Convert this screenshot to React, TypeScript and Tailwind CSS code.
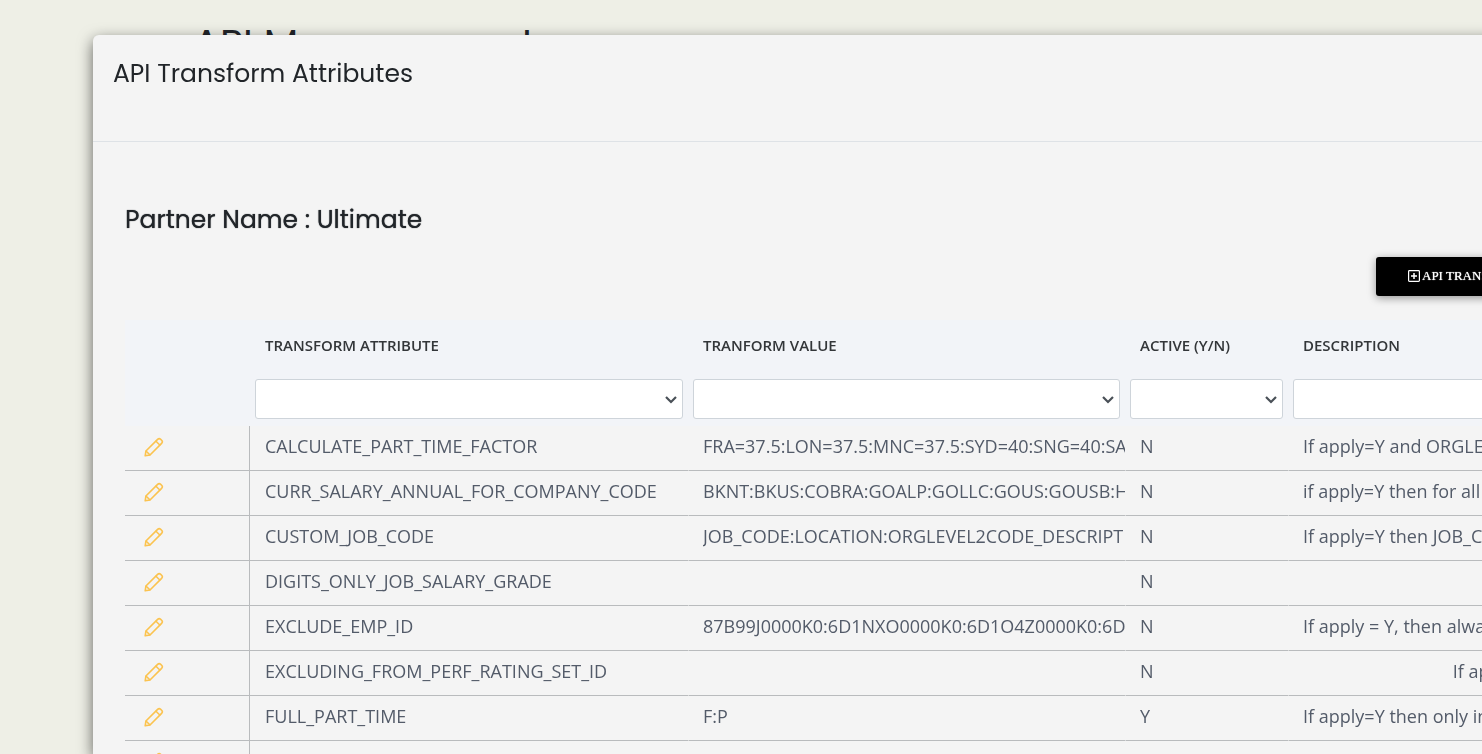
import React from "react";

type Row = { attribute: string; value: string; active: string; description: string };

const rows: Row[] = [
  { attribute: "CALCULATE_PART_TIME_FACTOR", value: "FRA=37.5:LON=37.5:MNC=37.5:SYD=40:SNG=40:SAO=40", active: "N", description: "If apply=Y and ORGLEVEL" },
  { attribute: "CURR_SALARY_ANNUAL_FOR_COMPANY_CODE", value: "BKNT:BKUS:COBRA:GOALP:GOLLC:GOUS:GOUSB:HK", active: "N", description: "if apply=Y then for all" },
  { attribute: "CUSTOM_JOB_CODE", value: "JOB_CODE:LOCATION:ORGLEVEL2CODE_DESCRIPTION", active: "N", description: "If apply=Y then JOB_CODE" },
  { attribute: "DIGITS_ONLY_JOB_SALARY_GRADE", value: "", active: "N", description: "" },
  { attribute: "EXCLUDE_EMP_ID", value: "87B99J0000K0:6D1NXO0000K0:6D1O4Z0000K0:6D1", active: "N", description: "If apply = Y, then always" },
  { attribute: "EXCLUDING_FROM_PERF_RATING_SET_ID", value: "", active: "N", description: " ".repeat(32) + "If apply=Y" },
  { attribute: "FULL_PART_TIME", value: "F:P", active: "Y", description: "If apply=Y then only in" },
  { attribute: "", value: "", active: "", description: "" },
];

const headings = ["TRANSFORM ATTRIBUTE", "TRANFORM VALUE", "ACTIVE (Y/N)", "DESCRIPTION"];

function PencilIcon() {
  return (
    <svg width="20" height="20" viewBox="0 0 20 20" fill="none" stroke="currentColor" strokeWidth="1.6" strokeLinejoin="round" strokeLinecap="round" aria-hidden="true">
      <path d="M1.2 18.8 1.9 14 13.6 2.4a2.2 2.2 0 0 1 3.1 0l.9.9a2.2 2.2 0 0 1 0 3.1L6 18Z" />
      <path d="M12 4.2l3.8 3.8M2.2 14.2l3.6 3.6" />
    </svg>
  );
}

function PlusSquareIcon() {
  return (
    <svg width="12" height="12" viewBox="0 0 12 12" fill="none" stroke="currentColor" strokeWidth="1.2" aria-hidden="true">
      <rect x="0.6" y="0.6" width="10.8" height="10.8" rx="0.8" />
      <path d="M6 3v6M3 6h6" strokeWidth="1.5" />
    </svg>
  );
}

function Cell({ children }: { children: React.ReactNode }) {
  return (
    <td className="overflow-hidden border-b border-l border-b-[#b9bbbd] border-l-[#f4f4f4] p-0 pb-[5px] pl-[14px] nth-2:border-l-0 nth-2:pl-[15px]">
      <div className="overflow-hidden whitespace-pre">{children}</div>
    </td>
  );
}

function Filter({ label }: { label: string }) {
  return (
    <div className="relative">
      <select
        aria-label={label}
        className="block h-10 w-full appearance-none rounded-[3px] border border-[#ced4da] bg-white px-1 text-base text-[#495057]"
      >
        <option />
      </select>
      <svg className="pointer-events-none absolute top-[14px] right-[5px]" width="14" height="14" viewBox="0 0 14 14" fill="none" stroke="#495057" strokeWidth="2.2" aria-hidden="true">
        <path d="M2 4 7 9 12 4" />
      </svg>
    </div>
  );
}

function AttributeTable() {
  return (
    <table className="w-full table-fixed border-separate border-spacing-0 text-left">
      <colgroup>
        <col className="w-[125px]" />
        <col className="w-[438px]" />
        <col className="w-[437px]" />
        <col className="w-[163px]" />
        <col />
      </colgroup>
      <thead className="bg-[#f2f4f8]">
        <tr className="h-[52px]">
          <td />
          {headings.map((h) => (
            <th key={h} scope="col" className="p-0 pb-0.5 pl-[15px] text-[15px] leading-5 font-semibold text-[#333639]">
              {h}
            </th>
          ))}
        </tr>
        <tr className="h-[54px]">
          <td />
          {headings.map((h) => (
            <td key={h} className="px-[5px] py-0">
              <Filter label={h} />
            </td>
          ))}
        </tr>
      </thead>
      <tbody className="text-[18px] leading-6 text-[#535b69]">
        {rows.map((r, i) => (
          <tr key={i} className="h-[45px]">
            <td className="border-r border-b border-[#b9bbbd] p-0 pb-0.5 pl-[19px]">
              <button type="button" aria-label="Edit" className="block text-[#fbc34f]">
                <PencilIcon />
              </button>
            </td>
            <Cell>{r.attribute}</Cell>
            <Cell>{r.value}</Cell>
            <Cell>{r.active}</Cell>
            <Cell>{r.description}</Cell>
          </tr>
        ))}
      </tbody>
    </table>
  );
}

export default function App() {
  return (
    <div className="h-screen overflow-hidden bg-[#eeefe6] font-['Open_Sans',sans-serif]">
      <h1 className="pt-[20px] pl-[193px] font-['Poppins','Inter',sans-serif] text-[40px] leading-[48px] text-[#212529]">
        API Management
      </h1>
      <div className="fixed inset-0 flex overflow-hidden pt-[35px] pl-[93px]">
        <section
          role="dialog"
          aria-labelledby="dialog-title"
          className="-mr-8 min-w-0 flex-1 overflow-hidden rounded-tl-md bg-[#f4f4f4] shadow-[0_5px_15px_rgba(0,0,0,0.6)]"
        >
          <header className="h-[107px] border-b border-[#dee2e6] px-5 pt-[23px]">
            <h2 id="dialog-title" className="font-['Poppins','Inter',sans-serif] text-[25px] leading-8 text-[#212529]">
              API Transform Attributes
            </h2>
          </header>
          <div className="w-[1575px] px-8 pt-[62px]">
            <h3 className="font-['Poppins','Inter',sans-serif] text-[25px] leading-8 font-normal text-[#212529] [text-shadow:0_0_1px_#212529]">
              Partner Name : Ultimate
            </h3>
            <div className="flex justify-end pt-[21px] pb-6">
              <button
                type="button"
                className="flex h-[39px] w-[260px] items-center gap-0.5 rounded-[3px] bg-black pb-0.5 pl-8 font-['Liberation_Serif',serif] text-[13px] whitespace-nowrap text-white shadow-[0_2px_8px_rgba(0,0,0,0.4)] [text-shadow:0_0_1px_#fff]"
              >
                <PlusSquareIcon />
                API TRANSFORM ATTRIBUTE
              </button>
            </div>
            <AttributeTable />
          </div>
        </section>
      </div>
    </div>
  );
}
